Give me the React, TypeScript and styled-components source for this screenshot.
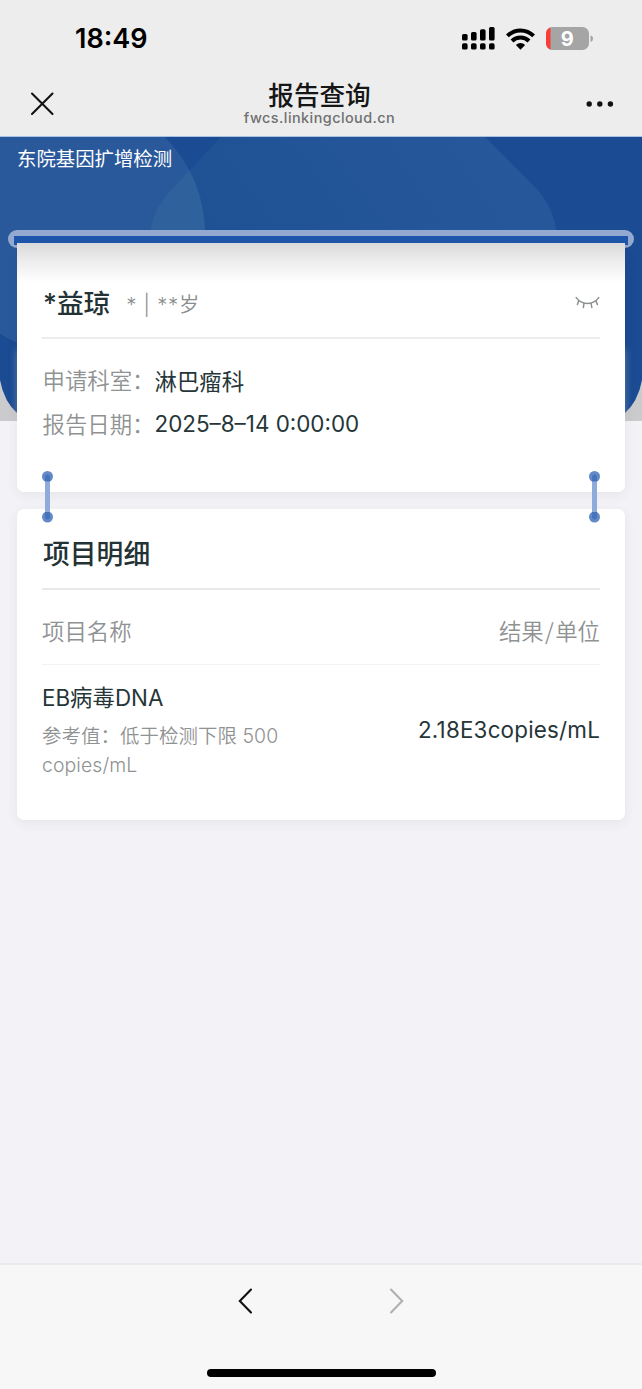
import React from "react";
import styled, { createGlobalStyle } from "styled-components";

const GlobalStyle = createGlobalStyle`
  * { box-sizing: border-box; }
  body {
    margin: 0;
    background: #f2f2f7;
    font-family: Inter, "Noto Sans CJK SC", sans-serif;
  }
`;

const Screen = styled.div`
  width: 642px;
  height: 1389px;
  display: flex;
  flex-direction: column;
  background: #f2f2f7;
  overflow: hidden;
`;

const StatusBar = styled.div`
  height: 76px;
  flex: none;
  display: flex;
  align-items: center;
  justify-content: space-between;
  padding: 2px 48px 0 75px;
  background: #ededed;
`;

const Time = styled.span`
  font-size: 27px;
  line-height: 32px;
  font-weight: 600;
  color: #000;
`;

const StatusIcons = styled.div`
  display: flex;
  align-items: center;
  gap: 11px;
  padding-bottom: 1px;
`;

const NavBar = styled.header`
  height: 61px;
  flex: none;
  display: grid;
  grid-template-columns: 80px 1fr 80px;
  align-items: center;
  background: #ededed;
`;

const NavButton = styled.button<{ $end?: boolean }>`
  border: 0;
  background: none;
  padding: ${(p) => (p.$end ? "0 28px 6px 0" : "0 0 6px 30px")};
  display: flex;
  justify-content: ${(p) => (p.$end ? "flex-end" : "flex-start")};
`;

const NavTitle = styled.div`
  display: flex;
  flex-direction: column;
  align-items: center;
  height: 61px;
  padding-right: 3px;
`;

const Title = styled.h1`
  margin: 5px 0 0;
  font-size: 25.6px;
  line-height: 30px;
  font-weight: 500;
  color: #161616;
`;

const Domain = styled.span`
  font-size: 14.4px;
  line-height: 18px;
  letter-spacing: 0.45px;
  font-weight: 500;
  color: #707070;
  margin-top: -2px;
`;

const Main = styled.main`
  position: relative;
  flex: 1;
  display: flex;
  flex-direction: column;
`;

const Backdrop = styled.svg`
  position: absolute;
  left: 0;
  top: -1px;
`;

const Heading = styled.div`
  position: relative;
  height: 93px;
  padding: 8px 17px;
  font-size: 19.4px;
  line-height: 28px;
  color: #fff;
`;

const Slot = styled.div`
  position: relative;
  height: 18px;
  margin: 0 8px;
  border-radius: 9px;
  background: #94a9cf;
  padding: 6px;
`;

const SlotInner = styled.div`
  height: 9px;
  background: #1e56ab;
`;

const Cards = styled.div`
  position: relative;
  margin: -5px 17px 0;
  display: flex;
  flex-direction: column;
  gap: 17px;
`;

const Card = styled.section<{ $height: number; $receipt?: boolean }>`
  height: ${(p) => p.$height}px;
  padding: 0 25px;
  background: ${(p) =>
    p.$receipt ? "linear-gradient(#d9d9db 0, #ededed 18px, #fff 40px)" : "#fff"};
  border-radius: ${(p) => (p.$receipt ? "0 0 7px 7px" : "7px")};
  box-shadow: 0 3px 12px rgba(50, 50, 60, 0.07);
`;

const PatientRow = styled.div`
  height: 96px;
  padding-top: 25px;
  display: flex;
  align-items: center;
  border-bottom: 2px solid #ececee;
`;

const Name = styled.h2`
  margin: 0 0 0 1px;
  font-size: 26.7px;
  line-height: 36px;
  font-weight: 500;
  color: #233234;
`;

const Meta = styled.span`
  flex: 1;
  margin: 4px 0 0 16px;
  font-size: 20.4px;
  line-height: 30px;
  letter-spacing: 0.7px;
  font-weight: 350;
  color: #8a8e8e;
`;

const Fields = styled.dl`
  margin: 0;
  padding-top: 19px;
`;

const Field = styled.div`
  display: flex;
  height: 43.5px;
  align-items: center;
  font-size: 22.4px;
`;

const Label = styled.dt`
  width: 112.5px;
  padding: 0 0 1px 0.5px;
  font-weight: 350;
  color: #8f9292;
`;

const Value = styled.dd`
  margin: 0;
  color: #263638;
`;

const SectionTitle = styled.h2`
  margin: 0;
  height: 81px;
  padding: 10px 0 0 1px;
  font-size: 26.8px;
  line-height: 70px;
  font-weight: 500;
  color: #233234;
  border-bottom: 2px solid #e8e8ea;
`;

const TableHead = styled.div`
  height: 75px;
  padding-top: 5px;
  display: flex;
  align-items: center;
  justify-content: space-between;
  font-size: 22.4px;
  font-weight: 350;
  color: #8f9292;
  border-bottom: 1px solid #f3f3f4;
`;

const Slash = styled.span`
  margin: 0 1.4px;
  font-family: "Noto Sans CJK SC", sans-serif;
`;

const ResultRow = styled.div`
  display: flex;
  justify-content: space-between;
  align-items: center;
  padding-top: 16px;
`;

const ItemName = styled.div`
  font-size: 22.4px;
  line-height: 34px;
  color: #263638;
`;

const Reference = styled.div`
  width: 250px;
  margin-top: 7px;
  font-size: 19.4px;
  line-height: 29px;
  letter-spacing: 0.1px;
  color: #8f9292;
  font-weight: 350;
`;

const Result = styled.div`
  padding-bottom: 2px;
  font-size: 22.4px;
  line-height: 32px;
  letter-spacing: 0.2px;
  color: #263638;
`;

const Connector = styled.svg<{ $right?: boolean }>`
  position: absolute;
  top: 228px;
  ${(p) => (p.$right ? "right: 25px;" : "left: 25px;")}
`;

const Toolbar = styled.footer`
  height: 126px;
  flex: none;
  display: flex;
  flex-direction: column;
  align-items: center;
  background: #f7f7f7;
  border-top: 2px solid #ebebee;
`;

const PageButtons = styled.div`
  display: flex;
  gap: 136px;
  padding: 23px 1px 0 0;
`;

const HomeIndicator = styled.div`
  width: 229px;
  height: 8px;
  margin-top: 55px;
  border-radius: 4px;
  background: #000;
`;

const Signal = () => (
  <svg width="33" height="23" viewBox="0 0 33 23">
    {[0, 1, 2, 3].map((i) => (
      <g key={i}>
        <rect x={i * 9} y={[7, 5, 2.3, 0][i]} width="5.6" height={[6.5, 8.5, 11.2, 13.5][i]} rx="1.6" />
        <rect x={i * 9} y="16.3" width="5.6" height="6.2" rx="1.6" />
      </g>
    ))}
  </svg>
);

const Wifi = () => (
  <svg width="29" height="22" viewBox="0 0 29 22" fill="none" stroke="#000" strokeWidth="4">
    <path d="M1.4 7.9a18.4 18.4 0 0 1 26.2 0" />
    <path d="M6 13a12 12 0 0 1 17 0" />
    <path d="M9.9 17a6.5 6.5 0 0 1 9.2 0L14.5 21.8Z" fill="#000" stroke="none" />
  </svg>
);

const Battery = () => (
  <svg width="48" height="23" viewBox="0 0 48 23">
    <defs>
      <clipPath id="battery">
        <rect width="43" height="23" rx="6.5" />
      </clipPath>
    </defs>
    <g clipPath="url(#battery)">
      <rect width="43" height="23" fill="#a5a5a5" />
      <rect width="4.5" height="23" fill="#fb3c33" />
    </g>
    <path d="M44.5 8.2q2.6.7 2.6 3.4t-2.6 3.4Z" fill="#a5a5a5" />
    <text x="21.3" y="18.6" textAnchor="middle" fontSize="20" fontWeight="700" fill="#fff">9</text>
  </svg>
);

const ClosedEye = () => (
  <svg width="25" height="14" viewBox="0 0 25 14" fill="none" stroke="#8b8f91" strokeWidth="1.5" strokeLinecap="round">
    <path d="M1.2 1.6Q5.5 7.4 12.5 7.4T23.8 1.6" />
    <path d="M3.7 5 2.4 8.6M9 7.2 8.4 11.4M16 7.2 16.8 11.4M21 5 22.4 8.6" />
  </svg>
);

const Link = ({ right }: { right?: boolean }) => (
  <Connector $right={right} width="11" height="52" viewBox="0 0 11 52">
    <circle cx="5.5" cy="5.5" r="5.5" fill="#6389c6" />
    <circle cx="5.5" cy="46" r="5.5" fill="#6389c6" />
    <rect x="3" y="3.5" width="5" height="45" rx="2.5" fill="#4674bc" />
    <rect x="3" y="10.5" width="5" height="30.5" fill="#8fabd9" />
  </Connector>
);

export default function App() {
  return (
    <Screen>
      <GlobalStyle />
      <StatusBar>
        <Time>18:49</Time>
        <StatusIcons>
          <Signal />
          <Wifi />
          <Battery />
        </StatusIcons>
      </StatusBar>
      <NavBar>
        <NavButton aria-label="关闭">
          <svg width="24" height="24" viewBox="0 0 24 24" stroke="#111" strokeWidth="2.1" strokeLinecap="round">
            <path d="M2 1.5 22.5 22M22.5 1.5 2 22" />
          </svg>
        </NavButton>
        <NavTitle>
          <Title>报告查询</Title>
          <Domain>fwcs.linkingcloud.cn</Domain>
        </NavTitle>
        <NavButton $end aria-label="更多">
          <svg width="28" height="6" viewBox="0 0 28 6" fill="#111">
            <circle cx="3.2" cy="3" r="2.7" />
            <circle cx="13.8" cy="3" r="2.7" />
            <circle cx="24.4" cy="3" r="2.7" />
          </svg>
        </NavButton>
      </NavBar>
      <Main>
        <Backdrop width="642" height="285" viewBox="0 136 642 285">
          <defs>
            <linearGradient id="band" gradientUnits="userSpaceOnUse" x1="190" y1="300" x2="460" y2="110">
              <stop offset="0" stopColor="#1c5193" />
              <stop offset="1" stopColor="#27579b" />
            </linearGradient>
            <filter id="soft" x="-10%" y="-20%" width="120%" height="140%">
              <feGaussianBlur stdDeviation="4" />
            </filter>
            <clipPath id="disc">
              <path d="M0 136H164Q205 178 205 235V330L0 334Z" />
            </clipPath>
            <clipPath id="panel">
              <path d="M0 136H642V380Q638 402 624 414H18Q4 402 0 380Z" />
            </clipPath>
          </defs>
          <rect y="136" width="642" height="285" fill="#cbcbcd" />
          <path d="M0 136H642V380Q638 402 624 414H18Q4 402 0 380Z" fill="#1a4b93" />
          <path d="M222 136H484L533 185Q557 209 558 245H149Q149 214 171 190Z" fill="url(#band)" />
          <path d="M0 136H164Q205 178 205 235V330L30 350L0 334Z" fill="#2a599b" />
          <path clipPath="url(#disc)" d="M222 136L171 190Q149 214 149 245H210V136Z" fill="#2f629c" />
          <g clipPath="url(#panel)">
            <rect x="17" y="350" width="608" height="90" fill="#fff" opacity="0.3" filter="url(#soft)" />
          </g>
          <rect y="136" width="642" height="1" fill="#a9c1e3" />
        </Backdrop>
        <Heading>东院基因扩增检测</Heading>
        <Slot>
          <SlotInner />
        </Slot>
        <Cards>
          <Card $height={249} $receipt>
            <PatientRow>
              <Name>*益琼</Name>
              <Meta>* | **岁</Meta>
              <ClosedEye />
            </PatientRow>
            <Fields>
              <Field>
                <Label>申请科室：</Label>
                <Value>淋巴瘤科</Value>
              </Field>
              <Field>
                <Label>报告日期：</Label>
                <Value>2025–8–14 0:00:00</Value>
              </Field>
            </Fields>
          </Card>
          <Card $height={310.5}>
            <SectionTitle>项目明细</SectionTitle>
            <TableHead>
              <span>项目名称</span>
              <span>
                结果<Slash>/</Slash>单位
              </span>
            </TableHead>
            <ResultRow>
              <div>
                <ItemName>EB病毒DNA</ItemName>
                <Reference>参考值：低于检测下限 500 copies/mL</Reference>
              </div>
              <Result>2.18E3copies/mL</Result>
            </ResultRow>
          </Card>
          <Link />
          <Link right />
        </Cards>
      </Main>
      <Toolbar>
        <PageButtons>
          <svg width="15" height="26" viewBox="0 0 15 26" fill="none" stroke="#111" strokeWidth="2.1" strokeLinecap="round">
            <path d="M13 1.5 1.8 13 13 24.5" />
          </svg>
          <svg width="15" height="26" viewBox="0 0 15 26" fill="none" stroke="#b0b0b0" strokeWidth="2.1" strokeLinecap="round">
            <path d="M2 1.5 13.2 13 2 24.5" />
          </svg>
        </PageButtons>
        <HomeIndicator />
      </Toolbar>
    </Screen>
  );
}
